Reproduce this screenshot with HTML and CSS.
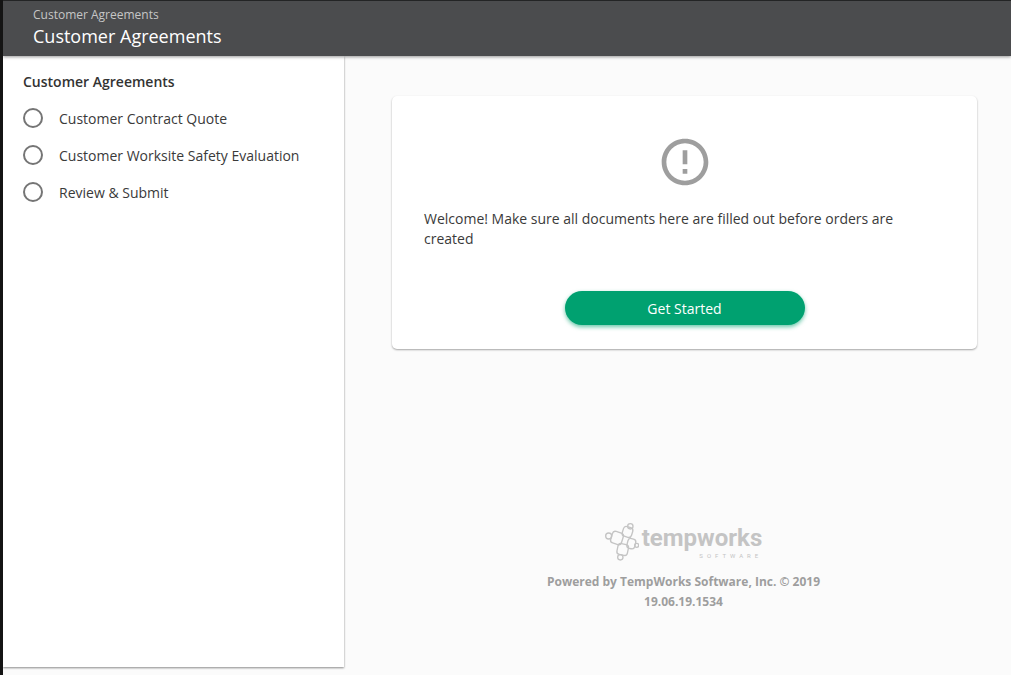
FILE: index.html
```html
<!DOCTYPE html>
<html lang="en">
<head>
	<meta charset="utf-8">
	<title>Customer Agreements</title>
	<link rel="stylesheet" href="styles.css">
</head>
<body>
	<header class="topbar">
		<div class="topbar-parent">Customer Agreements</div>
		<h1 class="topbar-title">Customer Agreements</h1>
	</header>

	<div class="layout">
		<nav class="sidebar">
			<h2 class="sidebar-title">Customer Agreements</h2>
			<label class="step"><input type="radio" name="step" value="quote">Customer Contract Quote</label>
			<label class="step"><input type="radio" name="step" value="safety">Customer Worksite Safety Evaluation</label>
			<label class="step"><input type="radio" name="step" value="review">Review &amp; Submit</label>
		</nav>

		<main class="content">
			<section class="card">
				<svg class="card-icon" viewBox="0 0 24 24" aria-hidden="true">
					<path d="M11 15h2v2h-2zm0-8h2v6h-2zm.99-5C6.47 2 2 6.48 2 12s4.47 10 9.99 10C17.52 22 22 17.52 22 12S17.52 2 11.99 2zM12 20c-4.42 0-8-3.58-8-8s3.58-8 8-8 8 3.58 8 8-3.58 8-8 8z"/>
				</svg>
				<p class="card-text">Welcome! Make sure all documents here are filled out before orders are created</p>
				<button type="button" class="start">Get Started</button>
			</section>

			<footer class="footer">
				<div class="logo">
					<!-- four linked figures -->
					<svg class="logo-mark" viewBox="0 0 102 114" aria-hidden="true">
						<circle cx="11" cy="39" r="9"/>
						<circle cx="76" cy="10" r="8"/>
						<circle cx="46" cy="103" r="8"/>
						<circle cx="95" cy="67" r="6"/>
						<rect x="19" y="27" width="34" height="36" rx="9" transform="rotate(17 36 45)"/>
						<rect x="53" y="12" width="29" height="30" rx="9" transform="rotate(17 68 27)"/>
						<rect x="37" y="63" width="32" height="33" rx="9" transform="rotate(12 53 80)"/>
						<rect x="67" y="47" width="24" height="30" rx="9" transform="rotate(14 79 62)"/>
					</svg>
					<div class="logo-text">
						<div class="logo-name">tempworks</div>
						<div class="logo-sub">SOFTWARE</div>
					</div>
				</div>
				<div>Powered by TempWorks Software, Inc. © 2019</div>
				<div>19.06.19.1534</div>
			</footer>
		</main>
	</div>
</body>
</html>
```

FILE: styles.css
```css
* {
  box-sizing: border-box;
}

body {
  display: flex;
  flex-direction: column;
  min-height: 100vh;
  margin: 0;
  border-left: 3px solid #141414;
  background-color: #fbfbfb;
  color: #3a3a3a;
  font-family: "Open Sans", "Noto Sans", sans-serif;
  font-size: 14px;
  line-height: 20px;
}

h1, h2, p {
  margin: 0;
}

.topbar {
  position: relative;
  padding: 4px 30px 8px;
  border-top: 1px solid #232425;
  background-color: #4b4c4e;
  box-shadow: 0 1px 3px rgba(0, 0, 0, 0.4);
}
.topbar-parent {
  color: #c6c6c6;
  font-size: 12px;
}
.topbar-title {
  color: #fff;
  font-size: 18px;
  font-weight: 500;
  line-height: 23px;
}

.layout {
  display: flex;
  flex: 1;
}

.sidebar {
  width: 341px;
  margin-bottom: 8px;
  padding: 16px 20px;
  background-color: #fff;
  box-shadow: 0 1px 2px rgba(0, 0, 0, 0.45);
}
.sidebar-title {
  margin-bottom: 16px;
  color: #333;
  font-size: 14px;
  font-weight: 600;
}
.step {
  display: flex;
  align-items: flex-start;
  gap: 16px;
  margin-bottom: 15px;
  line-height: 22px;
}
.step input {
  appearance: none;
  width: 20px;
  height: 20px;
  margin: 0;
  border: 2px solid #757575;
  border-radius: 50%;
}
.step input:checked {
  border-color: #00a170;
  background-color: #00a170;
}

.content {
  flex: 1;
  padding: 40px 34px 0 48px;
}

.card {
  display: flex;
  flex-direction: column;
  align-items: center;
  padding: 38px 32px 24px;
  border-radius: 5px;
  background-color: #fff;
  box-shadow: 0 1px 2px rgba(0, 0, 0, 0.35);
}
.card-icon {
  width: 56px;
  height: 56px;
  fill: #9e9e9e;
}
.card-text {
  align-self: stretch;
  margin: 19px 0 42px;
}
.start {
  width: 240px;
  height: 34px;
  padding: 2px 0 0;
  border: 0;
  border-radius: 17px;
  background-color: #00a170;
  box-shadow: 0 2px 4px rgba(0, 161, 112, 0.6);
  color: #fff;
  font: inherit;
  font-weight: 500;
}

.footer {
  margin-top: 174px;
  padding-right: 2px;
  color: #9e9e9e;
  font-size: 12px;
  font-weight: 700;
  text-align: center;
}
.logo {
  display: flex;
  justify-content: center;
  gap: 3px;
  margin-bottom: 11px;
}
.logo-mark {
  width: 34px;
  height: 38px;
  fill: none;
  stroke: #c4c4c4;
  stroke-width: 4;
}
.logo-text {
  padding-top: 1px;
  color: #c4c4c4;
  font-family: Roboto, "Liberation Sans", sans-serif;
}
.logo-name {
  font-size: 24px;
  line-height: 28px;
}
.logo-sub {
  font-size: 6px;
  font-weight: 400;
  letter-spacing: 4px;
  line-height: 8px;
  text-align: right;
}
```
